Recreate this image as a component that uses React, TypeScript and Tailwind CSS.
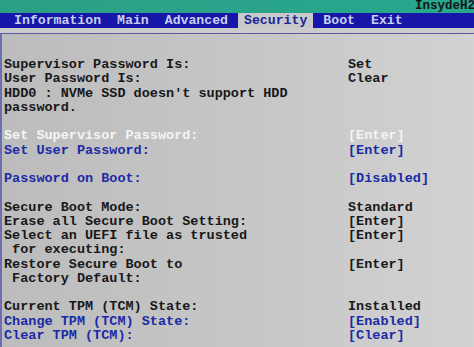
const MENU = [
  { label: 'Information', active: false },
  { label: 'Main', active: false },
  { label: 'Advanced', active: false },
  { label: 'Security', active: true },
  { label: 'Boot', active: false },
  { label: 'Exit', active: false },
]

type Row = { label?: string; value?: string; kind?: 'text' | 'link' | 'selected' }

const ROWS: Row[] = [
  { label: 'Supervisor Password Is:', value: 'Set' },
  { label: 'User Password Is:', value: 'Clear' },
  { label: "HDD0 : NVMe SSD doesn't support HDD" },
  { label: 'password.' },
  {},
  { label: 'Set Supervisor Password:', value: '[Enter]', kind: 'selected' },
  { label: 'Set User Password:', value: '[Enter]', kind: 'link' },
  {},
  { label: 'Password on Boot:', value: '[Disabled]', kind: 'link' },
  {},
  { label: 'Secure Boot Mode:', value: 'Standard' },
  { label: 'Erase all Secure Boot Setting:', value: '[Enter]' },
  { label: 'Select an UEFI file as trusted', value: '[Enter]' },
  { label: ' for executing:' },
  { label: 'Restore Secure Boot to', value: '[Enter]' },
  { label: ' Factory Default:' },
  {},
  { label: 'Current TPM (TCM) State:', value: 'Installed' },
  { label: 'Change TPM (TCM) State:', value: '[Enabled]', kind: 'link' },
  { label: 'Clear TPM (TCM):', value: '[Clear]', kind: 'link' },
]

const COLOR = {
  text: 'text-[#181818]',
  link: 'text-[#1b2aa6]',
  selected: 'text-[#f4f4f4]',
}

export default function App() {
  return (
    <div className="w-[474px] h-[347px] overflow-hidden bg-[#c4c4c4] font-['Liberation_Mono',monospace] font-bold">
      <div className="h-[13px] bg-gradient-to-r from-[#2b9f86] to-[#27a88e] flex justify-end items-end">
        <span className="text-[12.5px] leading-[13px] text-[#141414] -mr-[1px]">InsydeH2</span>
      </div>
      <div className="h-[15px] bg-[#1616a8] flex items-stretch pl-[8px] gap-[4px] text-[13.2px] leading-[15px]">
        {MENU.map(item => (
          <span
            key={item.label}
            className={item.active ? 'px-[6px] bg-[#c9c9cc] text-[#1d2796]' : 'px-[6px] text-[#c8d0f0]'}
          >
            {item.label}
          </span>
        ))}
      </div>
      <div className="h-[5px] bg-[#cbcbcb]" />
      <div className="h-px bg-[#5a5aa8]" />
      <div className="h-[313px] border-l-2 border-[#6b6fb0] bg-gradient-to-r from-[#bcbcbc] via-[#c6c6c6] to-[#d2d2d2] pt-[24px] pl-[2px] text-[13.5px] leading-[14.26px]">
        {ROWS.map((row, i) => {
          const color = COLOR[row.kind ?? 'text']
          return (
            <div key={i} className="grid grid-cols-[344px_1fr] h-[14.26px] whitespace-pre">
              <span className={color}>{row.label ?? ''}</span>
              <span className={color}>{row.value ?? ''}</span>
            </div>
          )
        })}
      </div>
    </div>
  )
}
